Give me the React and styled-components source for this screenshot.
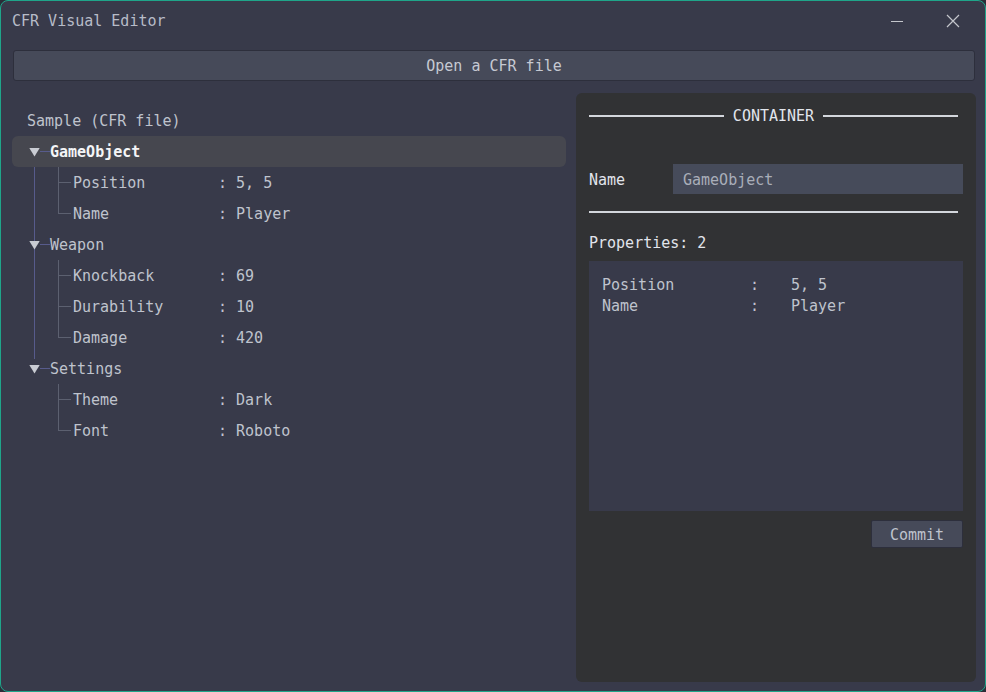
import React from "react";
import styled, { createGlobalStyle } from "styled-components";

const Global = createGlobalStyle`
  html, body { margin: 0; padding: 0; background: #2b2d38; }
  body { font-family: "DejaVu Sans Mono", "Liberation Mono", monospace; }
  * { box-sizing: border-box; }
`;

const Window = styled.div`
  width: 986px;
  height: 692px;
  background: #383a4a;
  border: 1px solid #1fa58a;
  border-radius: 8px;
  display: flex;
  flex-direction: column;
  overflow: hidden;
  font-family: "DejaVu Sans Mono", "Liberation Mono", monospace;
  font-size: 15px;
  color: #bfc3cd;
`;

const TitleBar = styled.div`
  height: 39px;
  display: flex;
  align-items: center;
  padding-left: 11px;
`;

const Title = styled.div`
  flex: 1;
  color: #b7bcc8;
  line-height: 20px;
`;

const WinButton = styled.button`
  width: 56px;
  height: 39px;
  border: 0;
  background: transparent;
  display: flex;
  align-items: center;
  justify-content: center;
  padding: 0;
  color: #c4c6cc;
`;

const OpenButton = styled.button`
  margin: 10px 10px 0 12px;
  height: 31px;
  background: #464a59;
  border: 1px solid #2d2f3c;
  border-radius: 3px;
  color: #c5c9d2;
  font-family: inherit;
  font-size: 15px;
  padding: 0;
`;

const Body = styled.div`
  flex: 1;
  display: flex;
  gap: 10px;
  padding: 12px 9px 9px 11px;
  min-height: 0;
`;

const TreePane = styled.div`
  width: 554px;
  padding-top: 17px;
  display: flex;
  flex-direction: column;
`;

const TreeHeading = styled.div`
  line-height: 22px;
  padding-left: 15px;
  margin-bottom: 4px;
  color: #bfc3cd;
`;

const Group = styled.div`
  position: relative;
  &::before {
    content: "";
    position: absolute;
    left: 22px;
    top: ${(p) => (p.$first ? "1px" : "0")};
    width: 1px;
    height: ${(p) => (p.$last ? "6px" : "auto")};
    bottom: ${(p) => (p.$last ? "auto" : "0")};
    background: #575b8c;
  }
`;

const NodeRow = styled.div`
  height: 31px;
  display: flex;
  align-items: center;
  border-radius: 6px;
  background: ${(p) => (p.$selected ? "#46474f" : "transparent")};
  color: ${(p) => (p.$selected ? "#f4f5f7" : "#bfc3cd")};
  font-weight: ${(p) => (p.$selected ? "bold" : "normal")};
  padding-left: 17px;
  position: relative;
  z-index: 0;
`;

const Arrow = styled.span`
  width: 11px;
  height: 9px;
  display: inline-block;
  background: #c9ccd3;
  clip-path: polygon(0 0, 100% 0, 50% 100%);
  margin-top: 1px;
  position: relative;
  z-index: 1;
`;

const Tick = styled.span`
  width: ${(p) => p.$w || 10}px;
  height: 1px;
  background: ${(p) => p.$color || "#575b8c"};
  display: inline-block;
`;

const Children = styled.div`
  position: relative;
  &::before {
    content: "";
    position: absolute;
    left: 46px;
    top: 0;
    bottom: 15px;
    width: 1px;
    background: #5c6070;
  }
`;

const LeafRow = styled.div`
  height: 31px;
  display: flex;
  align-items: center;
  padding-left: 47px;
  color: #bfc3cd;
`;

const LeafKey = styled.span`
  width: 145px;
  margin-left: 2px;
`;

const RightPanel = styled.div`
  flex: 1;
  background: #313234;
  border-radius: 6px;
  padding: 12px 13px 13px 13px;
  display: flex;
  flex-direction: column;
`;

const SectionTitle = styled.div`
  display: flex;
  align-items: center;
  gap: 9px;
  line-height: 22px;
  margin-right: 5px;
  color: #e1e5ec;
  &::before, &::after {
    content: "";
    flex: 1;
    height: 2px;
    background: #d3d6dc;
    margin-top: -1px;
  }
`;

const FieldRow = styled.div`
  display: flex;
  align-items: center;
  margin-top: 37px;
  height: 30px;
`;

const FieldLabel = styled.span`
  width: 84px;
  color: #e1e5ec;
  padding-top: 2px;
`;

const TextInput = styled.div`
  flex: 1;
  height: 30px;
  background: #464b5a;
  padding: 2px 0 0 10px;
  display: flex;
  align-items: center;
  color: #a9aeb9;
`;

const Divider = styled.div`
  height: 2px;
  background: #d3d6dc;
  margin: 17px 5px 0 0;
`;

const CountLabel = styled.div`
  margin-top: 19px;
  line-height: 22px;
  color: #e1e5ec;
`;

const PropsBox = styled.div`
  margin-top: 7px;
  height: 250px;
  background: #383a4a;
  padding: 14px 13px;
  display: flex;
  flex-direction: column;
`;

const PropLine = styled.div`
  display: grid;
  grid-template-columns: 148px 41px 1fr;
  line-height: 21px;
  color: #bfc3cd;
`;

const Footer = styled.div`
  display: flex;
  justify-content: flex-end;
  margin-top: 9px;
`;

const CommitButton = styled.button`
  width: 92px;
  height: 28px;
  background: #464a59;
  border: 1px solid #2d2f3c;
  border-radius: 2px;
  color: #bfc3cd;
  font-family: inherit;
  font-size: 15px;
  padding: 1px 0 0;
`;

const tree = [
  { name: "GameObject", selected: true, children: [["Position", "5, 5"], ["Name", "Player"]] },
  { name: "Weapon", children: [["Knockback", "69"], ["Durability", "10"], ["Damage", "420"]] },
  { name: "Settings", children: [["Theme", "Dark"], ["Font", "Roboto"]] },
];

export default function App() {
  return (
    <>
      <Global />
      <Window>
        <TitleBar>
          <Title>CFR Visual Editor</Title>
          <WinButton aria-label="minimize">
            <svg width="14" height="14" viewBox="0 0 14 14">
              <line x1="1" y1="7.5" x2="13" y2="7.5" stroke="#c4c6cc" strokeWidth="1" />
            </svg>
          </WinButton>
          <WinButton aria-label="close" style={{ marginRight: 4 }}>
            <svg width="14" height="14" viewBox="0 0 14 14">
              <path d="M1 1 L13 13 M13 1 L1 13" stroke="#c4c6cc" strokeWidth="1.2" fill="none" />
            </svg>
          </WinButton>
        </TitleBar>
        <OpenButton>Open a CFR file</OpenButton>
        <Body>
          <TreePane>
            <TreeHeading>Sample (CFR file)</TreeHeading>
            {tree.map((g, i) => (
              <Group key={g.name} $first={i === 0} $last={i === tree.length - 1}>
                <NodeRow $selected={g.selected}>
                  <Arrow />
                  <Tick />
                  <span>{g.name}</span>
                </NodeRow>
                <Children>
                  {g.children.map(([k, v]) => (
                    <LeafRow key={k}>
                      <Tick $color="#5c6070" $w={12} />
                      <LeafKey>{k}</LeafKey>
                      <span>: {v}</span>
                    </LeafRow>
                  ))}
                </Children>
              </Group>
            ))}
          </TreePane>
          <RightPanel>
            <SectionTitle>CONTAINER</SectionTitle>
            <FieldRow>
              <FieldLabel>Name</FieldLabel>
              <TextInput>GameObject</TextInput>
            </FieldRow>
            <Divider />
            <CountLabel>Properties: 2</CountLabel>
            <PropsBox>
              <PropLine>
                <span>Position</span>
                <span>:</span>
                <span>5, 5</span>
              </PropLine>
              <PropLine>
                <span>Name</span>
                <span>:</span>
                <span>Player</span>
              </PropLine>
            </PropsBox>
            <Footer>
              <CommitButton>Commit</CommitButton>
            </Footer>
          </RightPanel>
        </Body>
      </Window>
    </>
  );
}
